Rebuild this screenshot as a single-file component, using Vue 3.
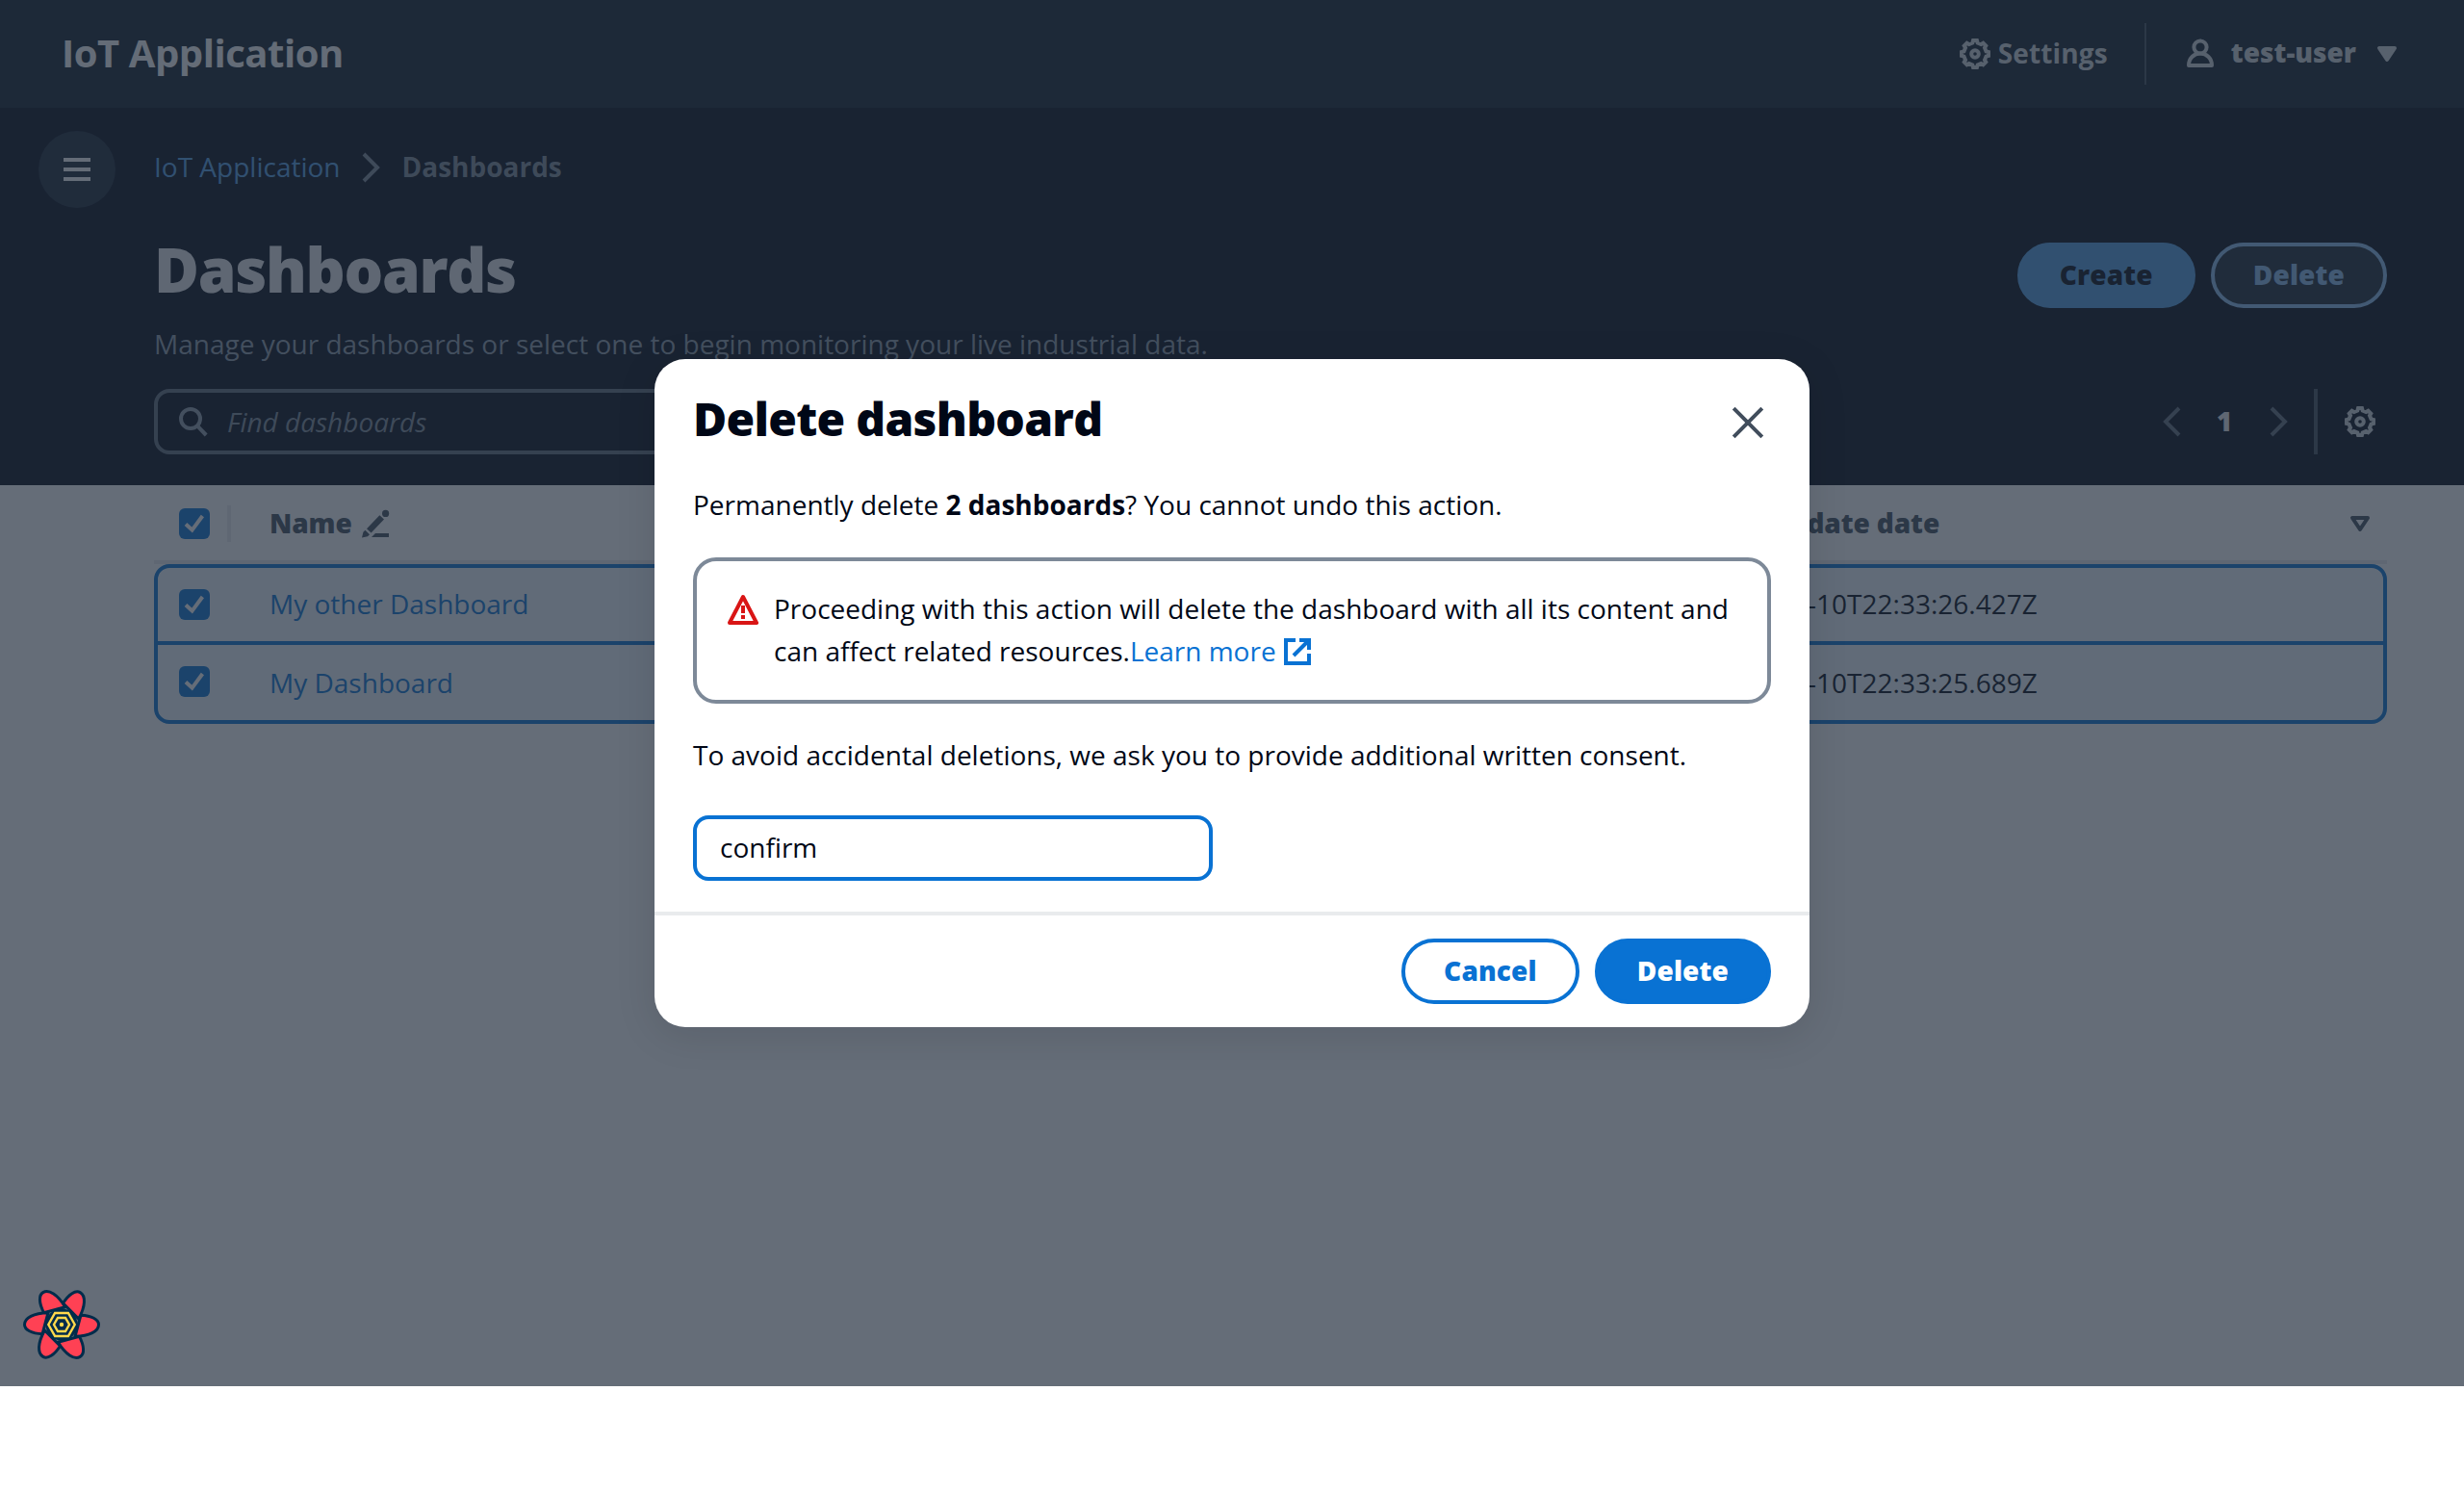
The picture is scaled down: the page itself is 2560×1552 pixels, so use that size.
<script setup>
import { ref } from 'vue'

const consent = ref('confirm')
const rows = [
  { name: 'My other Dashboard', updated: '2023-10-10T22:33:26.427Z' },
  { name: 'My Dashboard', updated: '2023-10-10T22:33:25.689Z' },
]
const petals = [0, 60, 120, 180, 240, 300]

// Eight-toothed cog outline centred on (8, 8)
const cogPoint = (deg, r) => {
  const a = (deg * Math.PI) / 180
  return `${(8 + r * Math.cos(a)).toFixed(2)} ${(8 + r * Math.sin(a)).toFixed(2)}`
}
const cogPoints = []
for (let k = 0; k < 8; k++) {
  const t = k * 45
  cogPoints.push(cogPoint(t - 8, 7.05), cogPoint(t + 8, 7.05), cogPoint(t + 13, 5.9), cogPoint(t + 32, 5.9))
}
const gear = `M${cogPoints.join('L')}Z`
</script>

<template>
  <div class="page">
    <div class="app">
      <header class="topnav">
        <div class="brand">IoT Application</div>
        <div class="utilities">
          <a class="settings">
            <svg class="icon" viewBox="0 0 16 16"><path class="line" :d="gear" /><circle class="line" cx="8" cy="8" r="1.900" /></svg>
            <span>Settings</span>
          </a>
          <span class="nav-divider"></span>
          <div class="user">
            <svg class="icon" viewBox="0 0 16 16"><circle class="line" cx="8" cy="4.500" r="3.300" /><path class="line join" d="M8 7.800c-3.300 0-6 2.500-6 6.200h12c0-3.700-2.700-6.200-6-6.200z" /></svg>
            <span>test-user</span>
            <svg class="icon" viewBox="0 0 16 16"><path class="solid join" d="M4 5h8l-4 6z" /></svg>
          </div>
        </div>
      </header>

      <section class="dark">
        <div class="crumb-row">
          <button class="menu"><svg class="icon" viewBox="0 0 16 16"><path class="line" d="M1 3h14M1 8h14M1 13h14" /></svg></button>
          <nav class="crumbs">
            <a>IoT Application</a>
            <svg class="icon" viewBox="0 0 16 16"><path class="line" d="m4 1 7 7-7 7" /></svg>
            <b>Dashboards</b>
          </nav>
        </div>
        <div class="heading">
          <div class="titles">
            <h1>Dashboards</h1>
            <p>Manage your dashboards or select one to begin monitoring your live industrial data.</p>
          </div>
          <div class="actions">
            <button class="btn create">Create</button>
            <button class="btn remove">Delete</button>
          </div>
        </div>
        <div class="tools">
          <div class="search">
            <svg class="icon" viewBox="0 0 16 16"><circle class="line" cx="7" cy="6.500" r="5" /><path class="line" d="m10.500 10.200 4.600 4.800" /></svg>
            <span>Find dashboards</span>
          </div>
          <div class="paging">
            <svg class="icon muted" viewBox="0 0 16 16"><path class="line" d="m11 1-7 7 7 7" /></svg>
            <b>1</b>
            <svg class="icon muted" viewBox="0 0 16 16"><path class="line" d="m4 1 7 7-7 7" /></svg>
            <span class="tool-divider"></span>
            <svg class="icon" viewBox="0 0 16 16"><path class="line" :d="gear" /><circle class="line" cx="8" cy="8" r="1.900" /></svg>
          </div>
        </div>
      </section>

      <section class="table">
        <div class="thead">
          <span class="check"><svg viewBox="0 0 16 16"><path d="m3.500 8.300 3.300 3L12.200 4" /></svg></span>
          <span class="col-divider"></span>
          <div class="col-name">
            <b>Name</b>
            <svg class="icon" viewBox="0 0 16 16">
              <circle class="solid" cx="13.300" cy="2.700" r="1.800" />
              <path class="solid" d="M10.200 3.600l2.300 2.200-6.700 7-2.300-2.200zM2.700 11.400l2.300 2.200-1 1-3 .6.700-2.800zM8 13h7v2H6z" />
            </svg>
          </div>
          <div class="col-date"><b>Last update date</b>
            <svg class="icon" viewBox="0 0 16 16"><path class="line join" d="M4 5h8l-4 6z" /></svg>
          </div>
        </div>
        <div class="rows">
          <div v-for="row in rows" :key="row.name" class="row">
            <span class="check"><svg viewBox="0 0 16 16"><path d="m3.500 8.300 3.300 3L12.200 4" /></svg></span>
            <a class="col-name">{{ row.name }}</a>
            <span class="col-date">{{ row.updated }}</span>
          </div>
        </div>
      </section>
    </div>

    <div class="overlay">
      <div class="modal">
        <div class="modal-head">
          <h2>Delete dashboard</h2>
          <svg class="icon" viewBox="0 0 16 16"><path class="line" d="M.6.6l14.800 14.800M15.400.6.6 15.400" /></svg>
        </div>
        <div class="modal-body">
          <p>Permanently delete <b>2 dashboards</b>? You cannot undo this action.</p>
          <div class="alert">
            <svg class="icon" viewBox="0 0 16 16"><path class="line join" d="M8 1.500 15 15H1z" /><path class="line" d="M8 6v4M8 11v2" /></svg>
            <div>Proceeding with this action will delete the dashboard with all its content and can affect related resources.<a>Learn more <svg class="icon" viewBox="0 0 16 16"><path class="line" d="M7 2H2v12h12V9M9 2h5v5M14 2 6 10" /></svg></a></div>
          </div>
          <p class="consent">To avoid accidental deletions, we ask you to provide additional written consent.</p>
          <input v-model="consent" class="field" type="text" />
        </div>
        <div class="modal-foot">
          <button class="btn cancel">Cancel</button>
          <button class="btn confirm">Delete</button>
        </div>
      </div>
    </div>

    <svg class="query-logo" viewBox="-40 -36 80 72">
      <circle class="hub" r="16.500" />
      <path v-for="a in petals" :key="a" class="petal" :transform="`rotate(${a})`" d="M14 12.300C29 12 38.500 7 38.500 0C38.500 -5.500 31 -9.300 20 -9.800z" />
      <path class="hub" d="M-8 -14h16L16 0 8 14h-16L-16 0z" />
      <path class="ring" d="M-6.900 -12h13.800L13.700 0 6.900 12h-13.800L-13.700 0z" />
      <path class="ring" d="M-4 -7h8L8 0 4 7h-8L-8 0z" />
      <circle class="dot" r="2.200" />
    </svg>
  </div>
</template>

<style>
body { background: #fff; }
</style>

<style scoped>
.page, .page * { box-sizing: border-box; }
.page { position: relative; width: 2560px; height: 1552px; overflow: hidden; background: #fff; font: 28px/44px "Open Sans", sans-serif; color: #000716; }
h1, h2, p { margin: 0; }
button { font: inherit; padding: 0; border: 0; }
.app { height: 1440px; background: #fff; }
.icon { width: 32px; height: 32px; flex: none; display: block; overflow: visible; }
.line { fill: none; stroke: currentColor; stroke-width: 2; }
.solid { fill: currentColor; stroke: none; }
.join { stroke-linejoin: round; }
.solid.join { stroke: currentColor; stroke-width: 2; }

.topnav { height: 112px; background: #0f1b2a; display: flex; justify-content: space-between; padding: 0 64px; }
.brand { font-size: 40px; font-weight: 700; line-height: 110px; color: #fbfbfb; letter-spacing: -0.45px; }
.utilities { display: flex; align-items: center; color: #d1d5db; }
.settings { display: flex; align-items: center; gap: 8px; font-weight: 700; letter-spacing: 0.14px; }
.settings span { margin-top: -2px; }
.nav-divider { width: 2px; height: 64px; margin: 0 40px 0 38px; background: #414d5c; }
.user { display: flex; align-items: center; font-weight: 800; }
.user span { margin: -4px 16px 0 16px; }

.dark { height: 392px; background: #000716; display: flex; flex-direction: column; padding: 24px 80px 0 40px; }
.crumb-row { display: flex; height: 80px; }
.menu { width: 80px; height: 80px; border-radius: 50%; background: #192534; color: #fbfbfb; display: flex; align-items: center; justify-content: center; }
.crumbs { display: flex; align-items: center; height: 76px; margin-left: 40px; color: #7d8998; }
.crumbs a { color: #539fe5; }
.crumbs a, .crumbs b { margin-top: -2px; }
.crumbs .icon { margin: 0 16px; }
.heading { display: flex; justify-content: space-between; padding-left: 120px; height: 188px; }
.heading h1 { margin-top: 24px; font-size: 64px; line-height: 80px; font-weight: 800; color: #e9ebed; letter-spacing: -1.3px; }
.heading p { margin-top: 15px; color: #8d99a8; }
.actions { display: flex; gap: 16px; padding-top: 36px; }
.btn { height: 68px; padding: 0 40px 2px; border: 4px solid; border-radius: 34px; font-weight: 800; line-height: 58px; letter-spacing: 0.14px; }
.create { background: #539fe5; border-color: #539fe5; color: #000716; }
.remove { background: #192534; border-color: #89bdee; color: #89bdee; }
.tools { display: flex; justify-content: space-between; padding-left: 120px; }
.search { width: 1000px; height: 68px; border: 4px solid #5f6b7a; border-radius: 16px; display: flex; align-items: center; padding-left: 20px; gap: 20px; color: #8d99a8; }
.search span { font-style: italic; color: #7d8998; }
.paging { display: flex; align-items: center; height: 68px; color: #d1d5db; padding-right: 12px; }
.paging b { margin: -2px 33px 0 29px; width: 16px; font-weight: 800; color: #e9ebed; }
.paging .muted { color: #5f6b7a; }
.tool-divider { width: 4px; height: 68px; margin: 0 28px 0 20px; background: #414d5c; }

.table { padding: 0 80px 0 160px; }
.thead { display: flex; align-items: center; height: 82px; padding: 2px 12px 0 26px; border-bottom: 4px solid #e9ebed; color: #414d5c; }
.check { width: 32px; height: 32px; border-radius: 6px; background: #0972d3; flex: none; }
.check svg { display: block; width: 32px; height: 32px; }
.check path { fill: none; stroke: #fff; stroke-width: 2; }
.col-divider { width: 4px; height: 38px; margin-left: 18px; background: #e9ebed; }
.thead .col-name { display: flex; align-items: center; gap: 8px; margin-left: 40px; width: 1493px; }
.thead b { font-weight: 800; margin-top: -2px; letter-spacing: -0.1px; }
.thead .col-date { display: flex; align-items: center; justify-content: space-between; flex: 1; }
.rows { border: 4px solid #0972d3; border-radius: 16px; background: #f2f8fd; }
.row { display: flex; align-items: center; height: 76px; padding: 0 0 0 22px; }
.row .col-name, .row .col-date { margin-top: -2px; }
.row + .row { border-top: 4px solid #0972d3; height: 82px; }
.row + .row .check { margin-top: -2px; }
.row + .row .col-name, .row + .row .col-date { margin-top: 0; }
.row .col-name { width: 1493px; margin-left: 62px; color: #0972d3; }

.overlay { position: absolute; left: 0; top: 0; width: 2560px; height: 1440px; background: rgba(35, 47, 62, 0.7); display: flex; align-items: center; justify-content: center; }
.modal { width: 1200px; height: 694px; background: #fff; border-radius: 32px; box-shadow: 0 8px 40px 2px rgba(0, 7, 22, 0.1); display: flex; flex-direction: column; }
.modal-head { display: flex; justify-content: space-between; padding: 32px 48px 0 40px; height: 129px; }
.modal-head h2 { font-size: 48px; line-height: 60px; font-weight: 800; letter-spacing: -0.72px; }
.modal-head .icon { margin-top: 18px; color: #414d5c; }
.modal-body { flex: 1; padding: 0 40px; }
.alert { margin: 33px 0 31px; height: 152px; border: 4px solid #7d8998; border-radius: 24px; display: flex; gap: 16px; padding: 27px 30px 0 32px; }
.alert > .icon { margin-top: 7px; color: #d91515; }
.alert a { color: #0972d3; }
.alert a .icon { display: inline-block; vertical-align: -6px; margin-left: -1px; }
.field { display: block; width: 540px; height: 68px; margin-top: 41px; padding: 0 24px 2px; border: 4px solid #0972d3; border-radius: 16px; font: inherit; color: inherit; background: #fff; outline: 0; }
.modal-foot { height: 120px; border-top: 4px solid #e9ebed; display: flex; justify-content: flex-end; gap: 16px; padding: 24px 40px; }
.cancel { background: #fff; border-color: #0972d3; color: #0972d3; }
.confirm { background: #0972d3; border-color: #0972d3; color: #fff; }

.query-logo { position: absolute; left: 24px; top: 1340px; width: 80px; height: 72px; overflow: visible; }
.petal { fill: #ff4154; stroke: #002c4b; stroke-width: 3; stroke-linejoin: round; }
.hub { fill: #002c4b; }
.ring { fill: none; stroke: #ffd94c; stroke-width: 2.4; }
.dot { fill: #ffd94c; }
</style>
